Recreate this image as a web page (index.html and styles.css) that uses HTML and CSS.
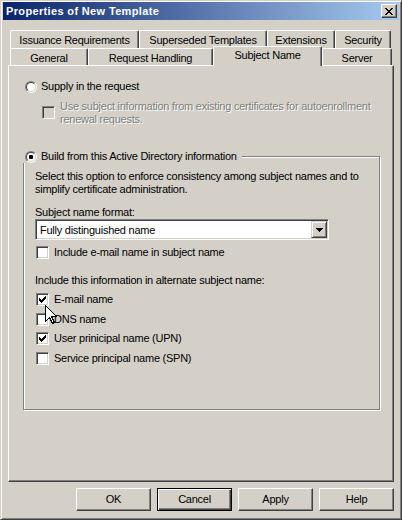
FILE: index.html
```html
<!DOCTYPE html>
<html lang="en">
<head>
<meta charset="utf-8">
<title>Properties of New Template</title>
<link rel="stylesheet" href="styles.css">
</head>
<body>
<div class="window">
  <div class="titlebar">
    <span class="title">Properties of New Template</span>
    <span class="caption-btn">
      <svg class="close-glyph" width="8" height="7" viewBox="0 0 8 7"><path d="M0 0h2v1H0z M6 0h2v1H6z M1 1h2v1H1z M5 1h2v1H5z M2 2h4v1H2z M3 3h2v1H3z M2 4h4v1H2z M1 5h2v1H1z M5 5h2v1H5z M0 6h2v1H0z M6 6h2v1H6z"/></svg>
    </span>
  </div>

  <div class="content">
    <div class="tabs">
      <div class="tab-row row-back">
        <div class="tab tab-issuance">Issuance Requirements</div>
        <div class="tab tab-superseded">Superseded Templates</div>
        <div class="tab tab-extensions">Extensions</div>
        <div class="tab tab-security">Security</div>
      </div>
      <div class="tab-row row-front">
        <div class="tab tab-general">General</div>
        <div class="tab tab-request">Request Handling</div>
        <div class="tab tab-subject selected">Subject Name</div>
        <div class="tab tab-server">Server</div>
      </div>
    </div>

    <div class="panel">
      <div class="radio-row supply">
        <span class="radio"><span class="radio-in"></span></span>
        <span class="opt-label">Supply in the request</span>
      </div>

      <div class="check-row renew disabled">
        <span class="check"></span>
        <span class="opt-label">Use subject information from existing certificates for autoenrollment<br>renewal requests.</span>
      </div>

      <div class="group">
        <div class="legend">
          <span class="radio"><span class="radio-in"><span class="dot"></span></span></span>
          <span class="opt-label">Build from this Active Directory information</span>
        </div>

        <p class="desc">Select this option to enforce consistency among subject names and to<br>simplify certificate administration.</p>

        <div class="field-label">Subject name format:</div>
        <div class="combo">
          <span class="combo-text">Fully distinguished name</span>
          <span class="combo-btn">
            <svg width="7" height="4" viewBox="0 0 7 4"><path d="M0 0h7v1H0z M1 1h5v1H1z M2 2h3v1H2z M3 3h1v1H3z"/></svg>
          </span>
        </div>

        <div class="check-row include-email">
          <span class="check"></span>
          <span class="opt-label">Include e-mail name in subject name</span>
        </div>

        <div class="field-label alt-label">Include this information in alternate subject name:</div>

        <div class="alt-list">
          <div class="check-row">
            <span class="check"><svg class="tick" width="7" height="7" viewBox="0 0 7 7"><path d="M0 2h1v3H0z M1 3h1v3H1z M2 4h1v3H2z M3 3h1v3H3z M4 2h1v3H4z M5 1h1v3H5z M6 0h1v3H6z"/></svg></span>
            <span class="opt-label">E-mail name</span>
          </div>
          <div class="check-row">
            <span class="check"></span>
            <span class="opt-label">DNS name</span>
          </div>
          <div class="check-row">
            <span class="check"><svg class="tick" width="7" height="7" viewBox="0 0 7 7"><path d="M0 2h1v3H0z M1 3h1v3H1z M2 4h1v3H2z M3 3h1v3H3z M4 2h1v3H4z M5 1h1v3H5z M6 0h1v3H6z"/></svg></span>
            <span class="opt-label">User prinicipal name (UPN)</span>
          </div>
          <div class="check-row">
            <span class="check"></span>
            <span class="opt-label">Service principal name (SPN)</span>
          </div>
        </div>
      </div>
    </div>

    <div class="buttons">
      <button class="btn">OK</button>
      <button class="btn default">Cancel</button>
      <button class="btn">Apply</button>
      <button class="btn">Help</button>
    </div>
  </div>
</div>

<svg class="cursor" width="13" height="20" viewBox="0 0 13 20"><path d="M0.5 0.5V16.5L4.5 12.5L7.5 18.5L9.5 17.5L6.5 11.5H11.5Z" fill="#fff" stroke="#000" stroke-width="1" stroke-linejoin="miter"/></svg>
</body>
</html>
```

FILE: styles.css
```css
* {
  box-sizing: border-box;
}

html,
body {
  margin: 0;
  padding: 0;
}

body {
  width: 402px;
  height: 520px;
  overflow: hidden;
  position: relative;
  background: #d4d0c8;
  color: #000;
  font-family: "Liberation Sans", Arial, sans-serif;
  font-size: 11px;
  line-height: 13px;
  letter-spacing: -0.25px;
}

.window {
  width: 402px;
  height: 520px;
  background: #d4d0c8;
  border: 1px solid;
  border-color: #d4d0c8 #404040 #404040 #d4d0c8;
  box-shadow: inset 1px 1px 0 #fff, inset -1px -1px 0 #808080;
  padding: 1px 2px 2px 2px;
}

/* Title bar */
.titlebar {
  height: 18px;
  display: flex;
  align-items: center;
  justify-content: space-between;
  padding-left: 3px;
  background: linear-gradient(to right, #0a246a, #a6caf0);
}

.title {
  color: #fff;
  font-weight: bold;
  font-size: 11px;
  letter-spacing: 0.35px;
  line-height: 13px;
  padding-top: 1px;
}

.caption-btn {
  width: 16px;
  height: 14px;
  margin-right: 2px;
  display: flex;
  align-items: center;
  justify-content: center;
  background: #d4d0c8;
  border: 1px solid;
  border-color: #fff #404040 #404040 #fff;
  box-shadow: inset -1px -1px 0 #808080;
}

.close-glyph {
  display: block;
  shape-rendering: crispEdges;
}

/* Content */
.content {
  padding-left: 5px;
}

.tabs {
  margin-top: 10px;
  margin-left: 2px;
}

.tab-row {
  display: flex;
  align-items: flex-end;
}

.row-back {
  height: 18px;
}

.row-front {
  height: 17px;
}

.tab {
  flex: none;
  height: 100%;
  padding-top: 3px;
  text-align: center;
  white-space: nowrap;
  background: #d4d0c8;
  border-top: 1px solid #fff;
  border-left: 1px solid #fff;
  border-right: 1px solid #404040;
  border-radius: 2px 2px 0 0;
  box-shadow: inset -1px 0 0 #808080;
}

.tab-issuance { width: 129px; }
.tab-superseded { width: 128px; }
.tab-extensions { width: 68px; }
.tab-security { width: 56px; }
.tab-general { width: 78px; }
.tab-request { width: 125px; }
.tab-subject { width: 109px; }
.tab-server { width: 70px; }

.tab.selected {
  position: relative;
  z-index: 1;
  height: 20px;
  margin-bottom: -1px;
  padding-top: 2px;
}

/* Panel */
.panel {
  width: 386px;
  height: 417px;
  border: 1px solid;
  border-color: #fff #404040 #404040 #fff;
  box-shadow: inset -1px -1px 0 #808080;
  display: flex;
  flex-direction: column;
  align-items: flex-start;
}

.radio-row,
.check-row {
  display: flex;
  align-items: flex-start;
  min-height: 13px;
}

.radio {
  flex: none;
  width: 12px;
  height: 12px;
  margin-top: 1px;
  border-radius: 50%;
  border: 1px solid;
  border-color: #808080 #fff #fff #808080;
  display: flex;
}

.radio-in {
  width: 10px;
  height: 10px;
  border-radius: 50%;
  border: 1px solid;
  border-color: #404040 #d4d0c8 #d4d0c8 #404040;
  background: #fff;
  display: flex;
  align-items: center;
  justify-content: center;
}

.dot {
  width: 4px;
  height: 4px;
  border-radius: 1px;
  background: #000;
}

.radio + .opt-label {
  margin-left: 4px;
}

.check {
  flex: none;
  width: 13px;
  height: 13px;
  border: 1px solid;
  border-color: #808080 #fff #fff #808080;
  box-shadow: inset 1px 1px 0 #404040, inset -1px -1px 0 #d4d0c8;
  background: #fff;
  display: flex;
  align-items: center;
  justify-content: center;
}

.tick {
  display: block;
  shape-rendering: crispEdges;
}

.check + .opt-label {
  margin-left: 5px;
  white-space: nowrap;
}

.opt-label {
  white-space: nowrap;
}

.supply {
  margin-top: 14px;
  margin-left: 16px;
}

.renew {
  margin-top: 7px;
  margin-left: 33px;
}

.renew .check {
  margin-top: 6px;
}

.disabled .check {
  background: #d4d0c8;
}

.disabled .opt-label {
  color: #808080;
  text-shadow: 1px 1px 0 #fff;
}

/* Group box */
.group {
  position: relative;
  margin-top: 30px;
  margin-left: 14px;
  width: 357px;
  height: 254px;
  border: 1px solid #808080;
  box-shadow: 1px 1px 0 #fff, inset 1px 1px 0 #fff;
  padding-left: 11px;
}

.legend {
  position: absolute;
  left: -2px;
  top: -7px;
  height: 13px;
  display: flex;
  align-items: flex-start;
  padding-left: 3px;
  padding-right: 5px;
  background: #d4d0c8;
}

.desc {
  margin: 13px 0 0 0;
  white-space: nowrap;
}

.field-label {
  margin-top: 10px;
  white-space: nowrap;
}

.alt-label {
  margin-top: 15px;
}

.combo {
  width: 294px;
  height: 21px;
  display: flex;
  align-items: stretch;
  background: #fff;
  border: 1px solid;
  border-color: #808080 #fff #fff #808080;
  box-shadow: inset 1px 1px 0 #404040, inset -1px -1px 0 #d4d0c8;
  padding: 1px;
}

.combo-text {
  flex: 1;
  padding-left: 3px;
  padding-top: 3px;
  white-space: nowrap;
}

.combo-btn {
  flex: none;
  width: 16px;
  display: flex;
  align-items: center;
  justify-content: center;
  background: #d4d0c8;
  border: 1px solid;
  border-color: #d4d0c8 #404040 #404040 #d4d0c8;
  box-shadow: inset 1px 1px 0 #fff, inset -1px -1px 0 #808080;
}

.combo-btn svg {
  display: block;
  shape-rendering: crispEdges;
}

.include-email {
  margin-top: 6px;
  margin-left: 1px;
}

.alt-list {
  margin-top: 6px;
  margin-left: 1px;
  display: flex;
  flex-direction: column;
  gap: 6.5px;
}

/* Buttons */
.buttons {
  width: 386px;
  margin-top: 6px;
  display: flex;
  justify-content: flex-end;
  gap: 6px;
}

.btn {
  width: 75px;
  height: 23px;
  margin: 0;
  padding: 0;
  font: inherit;
  letter-spacing: inherit;
  color: #000;
  background: #d4d0c8;
  border: 1px solid;
  border-color: #fff #404040 #404040 #fff;
  box-shadow: inset -1px -1px 0 #808080;
  border-radius: 0;
}

.btn.default {
  border: 1px solid #000;
  box-shadow: inset 1px 1px 0 #fff, inset -1px -1px 0 #404040, inset -2px -2px 0 #808080;
}

/* Mouse pointer */
.cursor {
  position: absolute;
  left: 45px;
  top: 305px;
  shape-rendering: crispEdges;
}
```
